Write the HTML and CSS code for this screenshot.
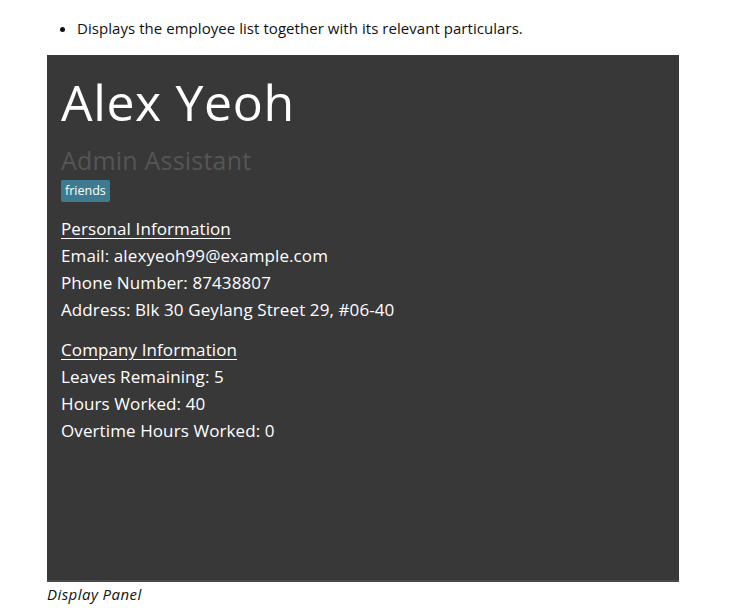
FILE: index.html
```html
<!DOCTYPE html>
<html>
<head>
<meta charset="utf-8">
<link rel="stylesheet" href="styles.css">
</head>
<body>
<div class="page">
  <ul class="notes">
    <li>Displays the employee list together with its relevant particulars.</li>
  </ul>
  <figure class="figure">
    <div class="panel">
      <h1 class="name">Alex Yeoh</h1>
      <div class="role">Admin Assistant</div>
      <div class="tags"><span class="tag">friends</span></div>
      <section class="group">
        <div class="group-title">Personal Information</div>
        <div class="row">Email: alexyeoh99@example.com</div>
        <div class="row">Phone Number: 87438807</div>
        <div class="row">Address: Blk 30 Geylang Street 29, #06-40</div>
      </section>
      <section class="group">
        <div class="group-title">Company Information</div>
        <div class="row">Leaves Remaining: 5</div>
        <div class="row">Hours Worked: 40</div>
        <div class="row">Overtime Hours Worked: 0</div>
      </section>
    </div>
    <figcaption class="caption">Display Panel</figcaption>
  </figure>
</div>
</body>
</html>
```
FILE: styles.css
```css
html, body {
  margin: 0;
  background: #fff;
}
body {
  font-family: "Open Sans", "Noto Sans", sans-serif;
  color: #111;
}
.page {
  padding: 15px 0 0 47px;
}
.notes {
  margin: 0;
  padding-left: 30px;
  font-size: 15px;
  line-height: 26px;
  letter-spacing: 0.05px;
}
.figure {
  margin: 14px 0 0 0;
}
.panel {
  width: 618px;
  height: 525px;
  background: #383838;
  border-bottom: 2px solid #4a4a4a;
  padding-left: 14px;
  display: flex;
  flex-direction: column;
}
.name {
  margin: 14px 0 0 0;
  font-weight: 400;
  font-size: 50px;
  line-height: 66px;
  color: #fff;
  letter-spacing: 0.6px;
}
.role {
  margin-top: 10px;
  font-size: 25px;
  line-height: 30px;
  color: #555;
  letter-spacing: 0.2px;
}
.tags {
  display: flex;
  margin-top: 5px;
}
.tag {
  background: #3e7b91;
  color: #fff;
  font-size: 12.5px;
  line-height: 22px;
  padding: 0 4px;
  border-radius: 2px;
}
.group {
  margin-top: 13px;
  color: #fff;
  font-size: 17px;
  line-height: 27px;
  letter-spacing: 0.1px;
}
.group + .group {
  margin-top: 13px;
}
.group-title {
  text-decoration: underline;
  text-underline-offset: 3px;
}
.caption {
  margin-top: 2px;
  font-style: italic;
  font-size: 15px;
  line-height: 20px;
  color: #111;
  letter-spacing: 0.45px;
}
```
